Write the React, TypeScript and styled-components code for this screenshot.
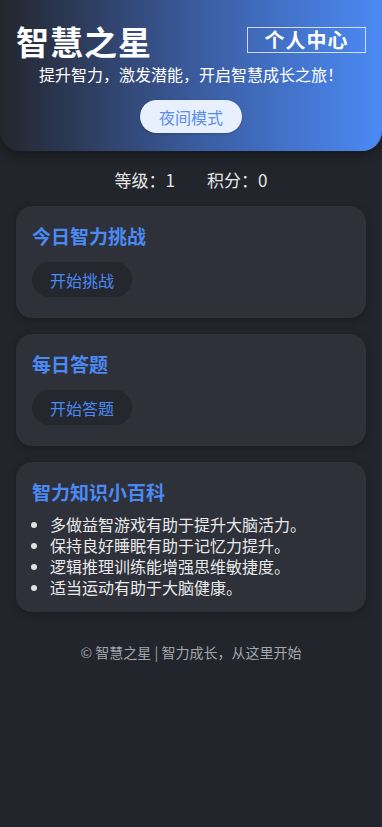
import React from "react";
import styled, { createGlobalStyle } from "styled-components";

const GlobalStyle = createGlobalStyle`
  html, body {
    margin: 0;
    padding: 0;
    background: #22252b;
  }
  body {
    font-family: "Noto Sans CJK SC", "Noto Sans", sans-serif;
    color: #e8e8e8;
  }
`;

const Page = styled.div`
  min-height: 827px;
  background: #22252b;
`;

const Header = styled.header`
  background: linear-gradient(90deg, #23262d 0%, #3a5a9c 50%, #4b8af5 100%);
  border-radius: 0 0 20px 20px;
  padding: 20px 16px 18px;
  box-shadow: 0 4px 12px rgba(0, 0, 0, 0.35);
  display: flex;
  flex-direction: column;
  align-items: center;
`;

const TopRow = styled.div`
  width: 100%;
  display: flex;
  justify-content: space-between;
  align-items: flex-start;
`;

const Title = styled.h1`
  margin: 0;
  font-size: 33px;
  line-height: 42px;
  font-weight: 700;
  color: #ffffff;
  letter-spacing: 1px;
`;

const ProfileButton = styled.button`
  margin-top: 7px;
  width: 119px;
  height: 26px;
  background: transparent;
  border: 1px solid rgba(255, 255, 255, 0.75);
  color: #ffffff;
  font-family: inherit;
  font-size: 20px;
  font-weight: 700;
  line-height: 22px;
  letter-spacing: 1px;
  padding: 0;
`;

const Subtitle = styled.p`
  margin: 1px 0 0;
  font-size: 16px;
  line-height: 22px;
  color: #ffffff;
`;

const NightButton = styled.button`
  margin-top: 15px;
  height: 33px;
  padding: 0 19px;
  border: none;
  border-radius: 17px;
  background: #e8f0fe;
  color: #5b8def;
  font-family: inherit;
  font-size: 16px;
  box-shadow: 0 1px 3px rgba(0, 0, 0, 0.2);
`;

const Stats = styled.div`
  display: flex;
  justify-content: center;
  gap: 32px;
  margin: 17px 0 14px;
  font-size: 17px;
  line-height: 24px;
  color: #e6e6e6;
`;

const Main = styled.main`
  display: flex;
  flex-direction: column;
  gap: 16px;
  padding: 0 16px;
`;

const Card = styled.section`
  background: #2e3139;
  border-radius: 16px;
  padding: 16px 16px 21px;
  box-shadow: 0 2px 8px rgba(0, 0, 0, 0.25);
`;

const CardTitle = styled.h2`
  margin: 0 0 12px;
  font-size: 19px;
  line-height: 28px;
  font-weight: 700;
  color: #4b8af5;
`;

const ActionButton = styled.button`
  height: 35px;
  padding: 0 18px;
  border: none;
  border-radius: 18px;
  background: #24272d;
  color: #4b8af5;
  font-family: inherit;
  font-size: 16px;
`;

const TipList = styled.ul`
  margin: -4px 0 -7px;
  padding-left: 18px;
  font-size: 16px;
  line-height: 21px;
  color: #eaeaea;

  li::marker {
    color: #e0e0e0;
  }
`;

const Footer = styled.footer`
  text-align: center;
  margin-top: 30px;
  font-size: 14px;
  line-height: 20px;
  color: #a3a6ad;
`;

const tips = [
  "多做益智游戏有助于提升大脑活力。",
  "保持良好睡眠有助于记忆力提升。",
  "逻辑推理训练能增强思维敏捷度。",
  "适当运动有助于大脑健康。",
];

export default function App() {
  return (
    <Page>
      <GlobalStyle />
      <Header>
        <TopRow>
          <Title>智慧之星</Title>
          <ProfileButton>个人中心</ProfileButton>
        </TopRow>
        <Subtitle>提升智力，激发潜能，开启智慧成长之旅！</Subtitle>
        <NightButton>夜间模式</NightButton>
      </Header>

      <Stats>
        <span>等级：1</span>
        <span>积分：0</span>
      </Stats>

      <Main>
        <Card>
          <CardTitle>今日智力挑战</CardTitle>
          <ActionButton>开始挑战</ActionButton>
        </Card>
        <Card>
          <CardTitle>每日答题</CardTitle>
          <ActionButton>开始答题</ActionButton>
        </Card>
        <Card>
          <CardTitle>智力知识小百科</CardTitle>
          <TipList>
            {tips.map((t) => (
              <li key={t}>{t}</li>
            ))}
          </TipList>
        </Card>
      </Main>

      <Footer>© 智慧之星 | 智力成长，从这里开始</Footer>
    </Page>
  );
}
